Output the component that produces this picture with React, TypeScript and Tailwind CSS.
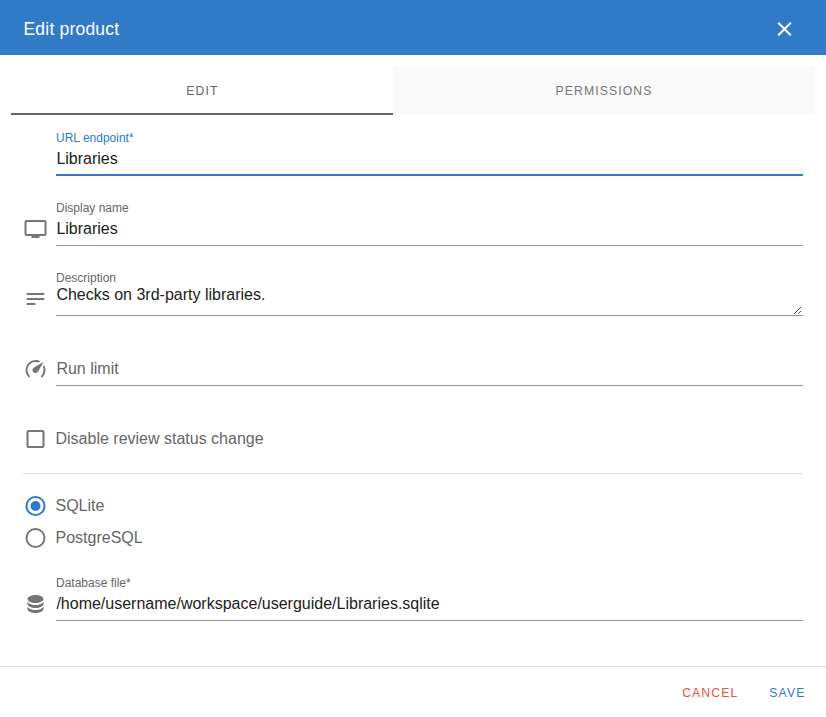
import React from 'react';

const icons = {
  desktop: 'M21 3H3c-1.100 0-2 .9-2 2v12c0 1.100.9 2 2 2h5v2h8v-2h5c1.100 0 2-.9 2-2V5c0-1.100-.9-2-2-2zm0 14H3V5h18v12z',
  text: 'M4,6H20A1,1 0 0,1 20,8H4A1,1 0 0,1 4,6M4,11H20A1,1 0 0,1 20,13H4A1,1 0 0,1 4,11M4,16H11A1,1 0 0,1 11,18H4A1,1 0 0,1 4,16Z',
  speed: 'M12,16A3,3 0 0,1 9,13C9,11.880 9.610,10.900 10.500,10.390L20.210,4.770L14.680,14.350C14.180,15.330 13.170,16 12,16M12,3C13.810,3 15.500,3.500 16.970,4.320L14.870,5.530C14,5.190 13,5 12,5A8,8 0 0,0 4,13C4,15.210 4.890,17.210 6.340,18.650H6.350C6.740,19.040 6.740,19.670 6.350,20.060C5.960,20.450 5.320,20.450 4.930,20.070V20.070C3.120,18.260 2,15.760 2,13A10,10 0 0,1 12,3M22,13C22,15.760 20.880,18.260 19.070,20.070V20.070C18.680,20.450 18.050,20.450 17.660,20.060C17.270,19.670 17.270,19.040 17.660,18.650V18.650C19.110,17.200 20,15.210 20,13C20,12 19.810,11 19.460,10.100L20.670,8C21.500,9.500 22,11.180 22,13Z',
  checkbox: 'M19,3H5C3.890,3 3,3.890 3,5V19A2,2 0 0,0 5,21H19A2,2 0 0,0 21,19V5C21,3.890 20.100,3 19,3M19,5V19H5V5H19Z',
  radio: 'M12,20A8,8 0 0,1 4,12A8,8 0 0,1 12,4A8,8 0 0,1 20,12A8,8 0 0,1 12,20M12,2A10,10 0 0,0 2,12A10,10 0 0,0 12,22A10,10 0 0,0 22,12A10,10 0 0,0 12,2Z',
  radioOn: 'M12,20A8,8 0 0,1 4,12A8,8 0 0,1 12,4A8,8 0 0,1 20,12A8,8 0 0,1 12,20M12,2A10,10 0 0,0 2,12A10,10 0 0,0 12,22A10,10 0 0,0 22,12A10,10 0 0,0 12,2M12,7A5,5 0 0,0 7,12A5,5 0 0,0 12,17A5,5 0 0,0 17,12A5,5 0 0,0 12,7Z',
  database: 'M12,3C7.580,3 4,4.790 4,7C4,9.210 7.580,11 12,11C16.420,11 20,9.210 20,7C20,4.790 16.420,3 12,3M4,9V12C4,14.210 7.580,16 12,16C16.420,16 20,14.210 20,12V9C20,11.210 16.420,13 12,13C7.580,13 4,11.210 4,9M4,14V17C4,19.210 7.580,21 12,21C16.420,21 20,19.210 20,17V14C20,16.210 16.420,18 12,18C7.580,18 4,16.210 4,14Z',
  close: 'M19,6.410L17.590,5L12,10.590L6.410,5L5,6.410L10.590,12L5,17.590L6.410,19L12,13.410L17.590,19L19,17.590L13.410,12L19,6.410Z',
};

type IconName = keyof typeof icons;

function Icon({ name, className = 'text-[#757575]' }: { name: IconName; className?: string }) {
  return (
    <svg viewBox="-0.5 0 25 24" className={`h-6 w-[25px] shrink-0 fill-current ${className}`}>
      <path d={icons[name]} />
    </svg>
  );
}

type FieldProps = {
  icon?: IconName;
  label?: string;
  value?: string;
  placeholder?: string;
  focused?: boolean;
  area?: boolean;
};

function Field({ icon, label, value, placeholder, focused, area }: FieldProps) {
  return (
    <div className="flex h-[70px] px-[23px]">
      <div className="w-[33px] shrink-0 pt-[27px]">{icon && <Icon name={icon} />}</div>
      <div className={`flex h-[56px] grow flex-col ${focused ? 'border-b-2 border-[#2f7ac6]' : 'border-b border-[#949494]'}`}>
        <div className={`h-[26px] shrink-0 pt-[10px] text-[12px] leading-4 ${focused ? 'text-[#2f7ac6]' : 'text-[#666]'}`}>{label}</div>
        <div className={`relative pl-[0.4px] text-[16px] leading-5 ${area ? '-mt-px h-[30px]' : 'pt-[3px]'} ${placeholder ? 'text-[#666]' : 'text-[#212121]'}`}>
          {value || placeholder}
          {area && (
            <svg viewBox="0 0 9 9" className="absolute bottom-0 right-px h-[9px] w-[9px] fill-none stroke-[#555]">
              <path d="M1 8L8 1M5 8L8 5" />
            </svg>
          )}
        </div>
      </div>
    </div>
  );
}

function Choice({ icon, color, label }: { icon: IconName; color: string; label: string }) {
  return (
    <div className="flex h-8 items-center pl-[23px]">
      <Icon name={icon} className={color} />
      <span className="pl-[7.5px] text-[16px] leading-5 text-[#666]">{label}</span>
    </div>
  );
}

export default function App() {
  return (
    <div className="flex h-[717px] w-[826px] flex-col overflow-hidden bg-white font-['Liberation_Sans',Arial,sans-serif]">
      <header className="flex h-[55px] shrink-0 items-center justify-between bg-[#307ac6] pl-[23.5px] pr-[29px] pt-[3px] text-white">
        <h1 className="text-[17.5px] leading-6 tracking-[0.2px]">Edit product</h1>
        <Icon name="close" className="text-white" />
      </header>
      <nav className="mx-[11px] mt-3 flex h-12 shrink-0 text-[12.25px] tracking-[1.09px] text-[#666]">
        <div className="flex w-[382px] items-center justify-center border-b-2 border-[#666] pl-px pt-[2px]">EDIT</div>
        <div className="flex grow items-center justify-center bg-[#fafafa] text-[#757575]">PERMISSIONS</div>
      </nav>
      <main className="h-[551px] shrink-0 pt-[5px]">
        <Field label="URL endpoint*" value="Libraries" focused />
        <Field icon="desktop" label="Display name" value="Libraries" />
        <Field icon="text" label="Description" value="Checks on 3rd-party libraries." area />
        <Field icon="speed" placeholder="Run limit" />
        <div className="pt-[23px]">
          <Choice icon="checkbox" color="text-[#757575]" label="Disable review status change" />
        </div>
        <div className="mx-[23px] mt-[18px] border-t border-[#dedede]" />
        <div className="mt-4">
          <Choice icon="radioOn" color="text-[#2f7ac6]" label="SQLite" />
          <Choice icon="radio" color="text-[#757575]" label="PostgreSQL" />
        </div>
        <div className="mt-[11px]">
          <Field icon="database" label="Database file*" value="/home/username/workspace/userguide/Libraries.sqlite" />
        </div>
      </main>
      <footer className="flex h-[51px] shrink-0 items-center justify-end gap-[31px] border-t border-[#dedede] pr-[20.5px] pt-[2px] text-[12.25px] tracking-[1.09px]">
        <button className="text-[#f0513a]">CANCEL</button>
        <button className="text-[#2f7ac6]">SAVE</button>
      </footer>
    </div>
  );
}
